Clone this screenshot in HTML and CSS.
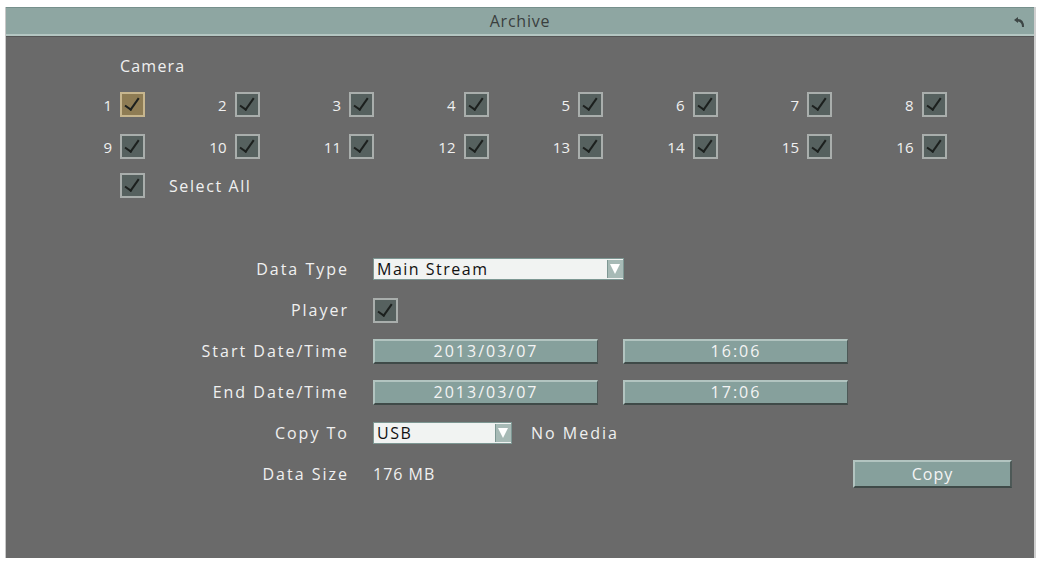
FILE: index.html
```html
<!DOCTYPE html>
<html lang="en">
<head>
  <meta charset="UTF-8" />
  <title>Archive</title>
  <link rel="stylesheet" href="styles.css">
</head>
<body>
  <div class="window">
    <div class="titlebar">
      <span class="title">Archive</span>
      <svg class="back" width="14" height="12" viewBox="0 0 14 12">
        <path d="M2 4 L6 1 L6 3 Q12 3 12 11 L10 11 Q10 6 6 5.5 L6 7 Z" fill="#3d4645"/>
      </svg>
    </div>

    <div class="panel">
      <div class="cameras">
        <div class="label-camera">Camera</div>
        <div class="cam-grid">
          <div class="cam"><span class="num">1</span><span class="box on active"></span></div>
          <div class="cam"><span class="num">2</span><span class="box on"></span></div>
          <div class="cam"><span class="num">3</span><span class="box on"></span></div>
          <div class="cam"><span class="num">4</span><span class="box on"></span></div>
          <div class="cam"><span class="num">5</span><span class="box on"></span></div>
          <div class="cam"><span class="num">6</span><span class="box on"></span></div>
          <div class="cam"><span class="num">7</span><span class="box on"></span></div>
          <div class="cam"><span class="num">8</span><span class="box on"></span></div>
          <div class="cam"><span class="num">9</span><span class="box on"></span></div>
          <div class="cam"><span class="num">10</span><span class="box on"></span></div>
          <div class="cam"><span class="num">11</span><span class="box on"></span></div>
          <div class="cam"><span class="num">12</span><span class="box on"></span></div>
          <div class="cam"><span class="num">13</span><span class="box on"></span></div>
          <div class="cam"><span class="num">14</span><span class="box on"></span></div>
          <div class="cam"><span class="num">15</span><span class="box on"></span></div>
          <div class="cam"><span class="num">16</span><span class="box on"></span></div>
        </div>
        <div class="select-all"><span class="box on"></span><span>Select All</span></div>
      </div>

      <div class="form">
        <label>Data Type</label>
        <div class="ctl">
          <div class="dropdown wide"><span>Main Stream</span><span class="arrow"></span></div>
        </div>

        <label>Player</label>
        <div class="ctl"><span class="box on"></span></div>

        <label>Start Date/Time</label>
        <div class="ctl">
          <div class="field">2013/03/07</div>
          <div class="field">16:06</div>
        </div>

        <label>End Date/Time</label>
        <div class="ctl">
          <div class="field">2013/03/07</div>
          <div class="field">17:06</div>
        </div>

        <label>Copy To</label>
        <div class="ctl">
          <div class="dropdown narrow"><span>USB</span><span class="arrow"></span></div>
          <span class="note">No Media</span>
        </div>

        <label>Data Size</label>
        <div class="ctl">
          <span class="size">176 MB</span>
          <button class="btn-copy">Copy</button>
        </div>
      </div>
    </div>
  </div>
</body>
</html>
```

FILE: styles.css
```css
body {
  margin: 0;
  padding: 0;
  background: #fff;
  font-family: 'Open Sans', 'DejaVu Sans', sans-serif;
}

.window {
  margin: 7px 0 0 5px;
  width: 1028px;
  height: 551px;
  background: #6a6a6a;
  border-left: 1px solid #c8c8c8;
  border-right: 2px solid #cfcfcf;
  display: flex;
  flex-direction: column;
}

.titlebar {
  height: 26px;
  background: #8ea6a2;
  border-top: 1px solid #76908c;
  border-bottom: 2px solid #b4c6c2;
  display: flex;
  align-items: center;
  justify-content: center;
  position: relative;
}

.title {
  color: #3a3f3e;
  font-size: 16px;
  letter-spacing: 0.8px;
}

.back {
  position: absolute;
  right: 8px;
  top: 8px;
}

.panel {
  flex: 1;
  border-top: 1px solid #555;
  color: #f0f0f0;
  font-size: 16px;
  letter-spacing: 2px;
}

/* camera section */
.cameras {
  padding: 18px 0 0 0;
}

.label-camera {
  margin-left: 114px;
  height: 22px;
  letter-spacing: 1.2px;
}

.cam-grid {
  margin-top: 15px;
  margin-left: 68px;
  display: grid;
  grid-template-columns: repeat(8, 114.5px);
  row-gap: 17px;
}

.cam {
  display: flex;
  align-items: center;
  height: 25px;
}

.num {
  width: 38px;
  text-align: right;
  margin-right: 8px;
  font-size: 15px;
  letter-spacing: 0;
}

.box {
  display: inline-block;
  width: 21px;
  height: 21px;
  border: 2px solid #a9aeac;
  background: #56615f;
  position: relative;
  flex: none;
}

.box.on::after {
  content: "";
  position: absolute;
  left: 6px;
  top: 1px;
  width: 6px;
  height: 13px;
  border-right: 2px solid #1c201e;
  border-bottom: 2px solid #1c201e;
  transform: rotate(35deg);
}

.box.active {
  background: #8e7c54;
  border-color: #c7b68e;
}

.select-all {
  margin: 14px 0 0 114px;
  display: flex;
  align-items: center;
  gap: 24px;
  height: 25px;
  letter-spacing: 1.6px;
}

/* form */
.form {
  margin: 59px 0 0 143px;
  display: grid;
  grid-template-columns: 200px 1fr;
  column-gap: 24px;
  grid-auto-rows: 24px;
  row-gap: 17px;
  align-items: center;
}

.form label {
  text-align: right;
}

.ctl {
  display: flex;
  align-items: center;
  height: 24px;
}

.dropdown {
  height: 20px;
  background: #f1f3f2;
  border: 1px solid #7d9793;
  color: #111;
  display: flex;
  align-items: center;
  justify-content: space-between;
  padding-left: 3px;
  letter-spacing: 1.5px;
}

.dropdown.wide {
  width: 246px;
}

.dropdown.narrow {
  width: 134px;
}

.arrow {
  width: 15px;
  height: 18px;
  background: #a7bab6;
  border-left: 1px solid #7d9793;
  position: relative;
}

.arrow::after {
  content: "";
  position: absolute;
  left: 2px;
  top: 4px;
  border-left: 5.5px solid transparent;
  border-right: 5.5px solid transparent;
  border-top: 10px solid #fff;
}

.field {
  width: 222px;
  height: 21px;
  background: #86a09c;
  border-top: 2px solid #b2c4c0;
  border-left: 2px solid #b2c4c0;
  border-bottom: 2px solid #3f4a48;
  border-right: 1px solid #4d5957;
  color: #f4f4f4;
  text-align: center;
  line-height: 21px;
  margin-right: 25px;
  letter-spacing: 2px;
}

.note {
  margin-left: 19px;
}

.size {
  letter-spacing: 1px;
}

.btn-copy {
  margin-left: auto;
  margin-right: 22px;
  width: 159px;
  height: 28px;
  background: #86a09c;
  border: none;
  border-top: 2px solid #b2c4c0;
  border-left: 2px solid #b2c4c0;
  border-bottom: 2px solid #3f4a48;
  border-right: 2px solid #4d5957;
  color: #f4f4f4;
  font-family: 'Open Sans', 'DejaVu Sans', sans-serif;
  font-size: 16px;
  letter-spacing: 1px;
}
```
